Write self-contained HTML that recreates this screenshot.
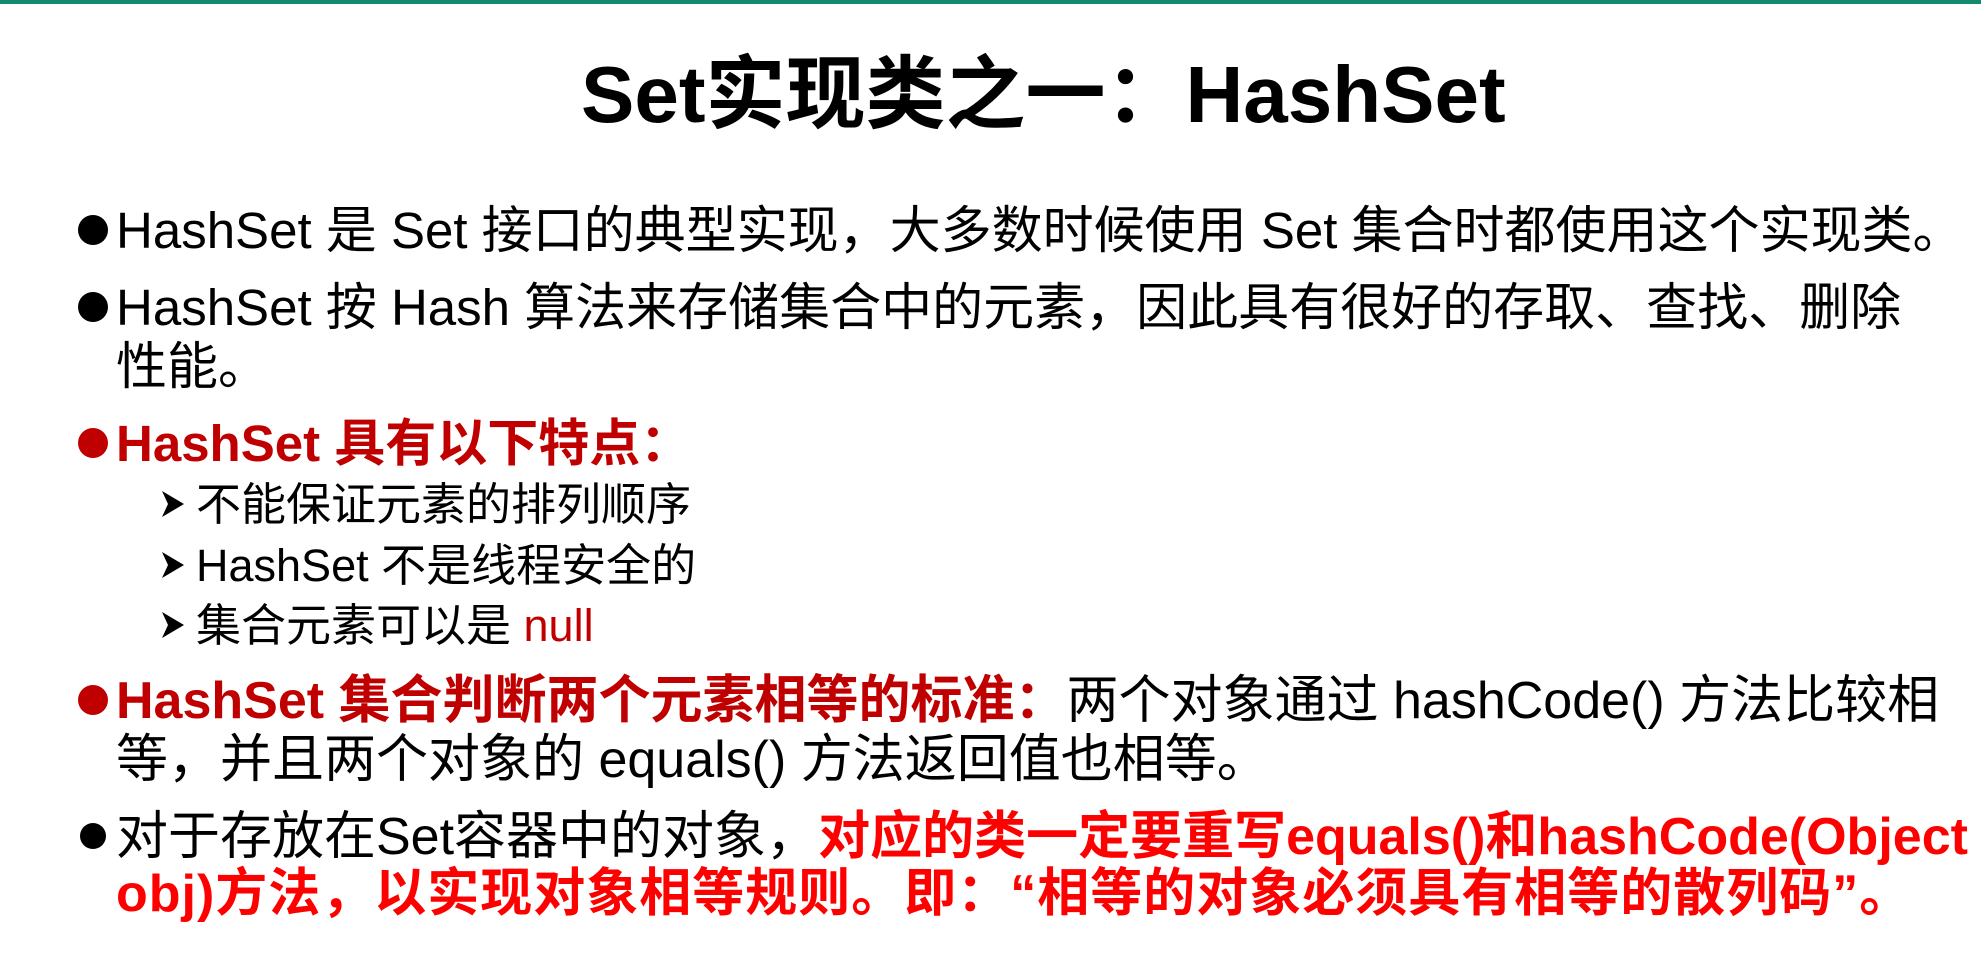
<!DOCTYPE html>
<html><head><meta charset="utf-8"><style>
html,body{margin:0;padding:0;background:#fff;}
body{width:1981px;height:962px;position:relative;overflow:hidden;font-family:"Liberation Sans","Noto Sans CJK SC",sans-serif;color:#000;}
.topline{position:absolute;left:0;top:0;width:1981px;height:4px;background:#138a6e;}
.l{position:absolute;white-space:nowrap;line-height:1;}
.t{left:581px;top:55px;font-size:80px;font-weight:bold;}
.b{font-size:51px;}
.s{font-size:45px;}
.dr{color:#c00000;font-weight:bold;}
.r{color:#ff0000;font-weight:bold;}
.dot{position:absolute;width:30px;height:30px;border-radius:50%;background:#000;}
.arr{position:absolute;width:26px;height:30px;}
</style></head><body>
<div class="topline"></div>
<div class="l t">Set实现类之一：HashSet</div>

<div class="dot" style="left:78px;top:215px;"></div>
<div class="l b" style="left:116px;top:205px;">HashSet 是 Set 接口的典型实现，大多数时候使用 Set 集合时都使用这个实现类。</div>

<div class="dot" style="left:78px;top:292px;"></div>
<div class="l b" style="left:116px;top:282px;">HashSet 按 Hash 算法来存储集合中的元素，因此具有很好的存取、查找、删除</div>
<div class="l b" style="left:116px;top:341px;">性能。</div>

<div class="dot" style="left:78px;top:428px;background:#c00000;"></div>
<div class="l b dr" style="left:116px;top:418px;">HashSet 具有以下特点：</div>

<svg class="arr" style="left:160px;top:489px;" viewBox="0 0 26 30"><path d="M2 2 L24 15 L2 28 L8 15 Z" fill="#000"/></svg>
<div class="l s" style="left:196px;top:482px;">不能保证元素的排列顺序</div>
<svg class="arr" style="left:160px;top:550px;" viewBox="0 0 26 30"><path d="M2 2 L24 15 L2 28 L8 15 Z" fill="#000"/></svg>
<div class="l s" style="left:196px;top:543px;">HashSet 不是线程安全的</div>
<svg class="arr" style="left:160px;top:610px;" viewBox="0 0 26 30"><path d="M2 2 L24 15 L2 28 L8 15 Z" fill="#000"/></svg>
<div class="l s" style="left:196px;top:603px;">集合元素可以是 <span style="color:#c00000">null</span></div>

<div class="dot" style="left:78px;top:685px;background:#c00000;"></div>
<div class="l b" style="left:116px;top:675px;font-size:52px;"><span class="dr">HashSet 集合判断两个元素相等的标准：</span>两个对象通过 hashCode() 方法比较相</div>
<div class="l b" style="left:116px;top:734px;font-size:52px;">等，并且两个对象的 equals() 方法返回值也相等。</div>

<div class="dot" style="left:80px;top:823px;width:26px;height:26px;"></div>
<div class="l b" style="left:116px;top:811px;font-size:52px;">对于存放在Set容器中的对象，<span class="r">对应的类一定要重写equals()和hashCode(Object</span></div>
<div class="l b r" style="left:116px;top:868px;font-size:52px;letter-spacing:1px">obj)方法，以实现对象相等规则。即：“相等的对象必须具有相等的散列码”。</div>
</body></html>
